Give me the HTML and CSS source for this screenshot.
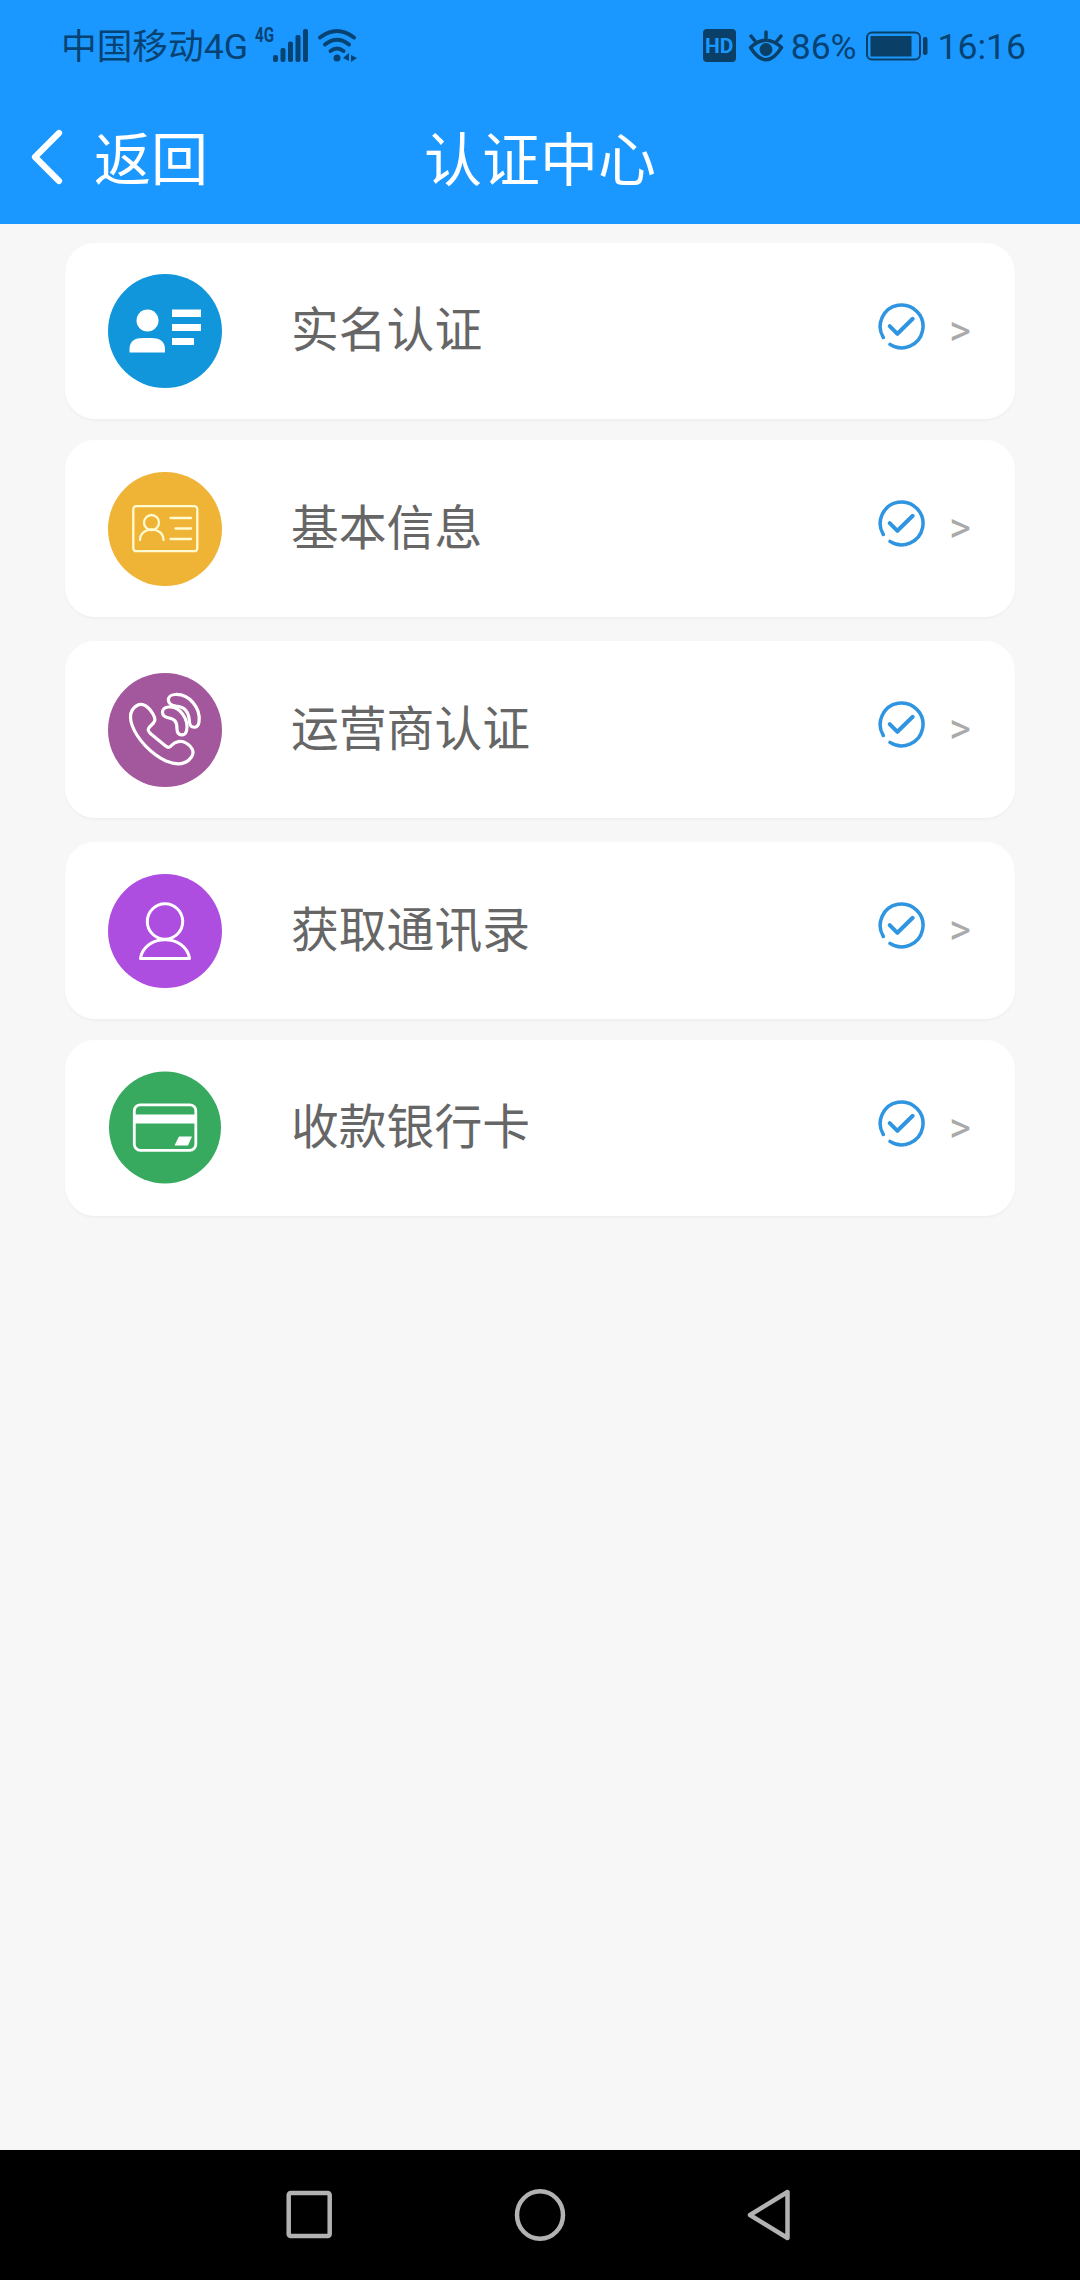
FILE: index.html
```html
<!DOCTYPE html>
<html lang="zh-CN">
<head>
<meta charset="utf-8">
<title>认证中心</title>
<link rel="stylesheet" href="styles.css">
</head>
<body>
<svg width="0" height="0" class="defs">
  <symbol id="check" viewBox="0 0 48 48">
    <g fill="none" stroke="#2f95e0" stroke-linecap="round" stroke-linejoin="round">
      <path stroke-width="3.500" d="M6.300 35.500A21.400 21.400 0 1 1 13 42.400"/>
      <path stroke-width="4" d="M12.700 24.200L20.400 31.800L35.700 16.800"/>
    </g>
  </symbol>
</svg>
<header class="top">
  <div class="status">
    <div class="status-left">
      <span class="carrier">中国移动4G</span>
      <svg class="signal" width="106" height="48" viewBox="0 -6 106 48">
        <text x="2" y="14" class="net" textLength="19" lengthAdjust="spacingAndGlyphs">4G</text>
        <g fill="#064272">
          <rect x="20" y="27" width="5" height="7" rx="2"/><rect x="27.500" y="20" width="5" height="14" rx="2"/><rect x="35" y="13.500" width="5" height="20.500" rx="2"/><rect x="42.500" y="7" width="5" height="27" rx="2"/><rect x="50" y="1" width="5" height="33" rx="2"/>
          <circle cx="84" cy="30" r="3.500"/><path d="M96 25v8l-6-3zM98 27v7l6-4z"/>
        </g>
        <g fill="none" stroke="#064272" stroke-width="4" stroke-linecap="round"><path d="M67 9.500Q84-3.500 101 9.500"/><path d="M72 16.500Q84 7 96 16.500"/><path d="M77.500 23Q84 18 90.500 23"/></g>
      </svg>
    </div>
    <div class="status-right">
      <span class="hd">HD</span>
      <svg width="36" height="34" viewBox="0 0 36 34" fill="none" stroke="#0a4068" stroke-width="3.500" stroke-linecap="round">
        <path d="M2.500 18.500Q18 4 33.500 18.500Q18 43 2.500 18.500Z" stroke-linejoin="round"/><path d="M18 3v6M3 7l4 5M33 7l-4 5"/><circle cx="18" cy="20.500" r="6.500" fill="#0a4068" stroke="none"/>
      </svg>
      <span class="percent">86%</span>
      <svg class="battery" width="62" height="30" viewBox="0 0 62 30">
        <rect x="1" y="1.500" width="53" height="27" rx="5" fill="none" stroke="#0a4068" stroke-width="2"/><rect x="4.500" y="5" width="41" height="20.500" fill="#0a4068"/><rect x="57" y="6" width="4.500" height="18" rx="2" fill="#0a4068"/>
      </svg>
      <span class="clock">16:16</span>
    </div>
  </div>
  <nav class="bar">
    <div class="back">
      <svg width="34" height="56" viewBox="0 0 34 56" fill="none" stroke="#fff" stroke-width="6.200" stroke-linecap="round" stroke-linejoin="round"><path d="M28 4L4 28L28 52"/></svg>
      <span>返回</span>
    </div>
    <h1>认证中心</h1>
  </nav>
</header>
<main class="list">
  <section class="card">
    <svg class="icon" viewBox="0 0 114 114"><circle cx="57" cy="57" r="57" fill="#1296db"/><g fill="#fff"><circle cx="39.500" cy="46.500" r="11"/><path d="M21.500 78.500V75C21.500 67 27 64 35 64H43C51 64 57 67 57 75V78.500Z"/><path d="M64 35.500H93V43H64zM64 50H93V57H64zM64 64H86V71H64z"/></g></svg>
    <span class="label">实名认证</span><svg class="check"><use href="#check"/></svg><span class="arrow">&gt;</span>
  </section>
  <section class="card">
    <svg class="icon" viewBox="0 0 114 114"><circle cx="57" cy="57" r="57" fill="#efb336"/><g fill="none" stroke="#fffbd0" stroke-width="2.300" stroke-linecap="round"><rect x="25.300" y="34.200" width="64" height="45" rx="3"/><circle cx="43.500" cy="50.500" r="7.500"/><path d="M32 68C32 54 55.500 54 55.500 68"/><path d="M62.500 46H83M67.500 56.500H83M62.500 67H83"/></g></svg>
    <span class="label">基本信息</span><svg class="check"><use href="#check"/></svg><span class="arrow">&gt;</span>
  </section>
  <section class="card">
    <svg class="icon" viewBox="0 0 114 114"><circle cx="57" cy="57" r="57" fill="#a3579c"/><g fill="none" stroke="#fff" stroke-width="3.200" stroke-linejoin="round"><path d="M29 32.500C35 29 41 34 45 41C49 48 46 49.500 42 53.500C39 56.500 40 58 43 61L57 72.500C60 75 61.500 75 64 72C67 68.500 73 67 78 70C84 73.500 87 79 83.500 84C78 92 68 92 58 88C43 81 29 66 24 52C21 43 23 36 29 32.500Z"/><path d="M67 21.500C81 20.500 93 35 91 49C90 56 82 56 81.500 49C81 39 76 33.500 68 33C58 32 58 22 67 21.500Z"/><path fill="#a3579c" d="M60 34C72 32 81 47 78.500 58C77 64 69 63 69 56C69 49 67 46 61 45C52 43.500 53 35 60 34Z"/></g></svg>
    <span class="label">运营商认证</span><svg class="check"><use href="#check"/></svg><span class="arrow">&gt;</span>
  </section>
  <section class="card">
    <svg class="icon" viewBox="0 0 114 114"><circle cx="57" cy="57" r="57" fill="#ad4ee0"/><g fill="none" stroke="#fff" stroke-width="3" stroke-linejoin="round"><circle cx="57" cy="47.500" r="17.700"/><path d="M32.500 84.500C36 59.500 78 59.500 81.500 84.500Z"/></g></svg>
    <span class="label">获取通讯录</span><svg class="check"><use href="#check"/></svg><span class="arrow">&gt;</span>
  </section>
  <section class="card">
    <svg class="icon" viewBox="0 0 114 114"><circle cx="57" cy="56.500" r="56" fill="#38aa5f"/><rect x="26.300" y="33.800" width="61.500" height="45.500" rx="6" fill="none" stroke="#fff" stroke-width="2.800"/><path d="M26 43.500H88V52.500H26zM71 65.500H84L80 74.500H66.500z" fill="#fff"/></svg>
    <span class="label">收款银行卡</span><svg class="check"><use href="#check"/></svg><span class="arrow">&gt;</span>
  </section>
</main>
<footer class="keys">
  <svg width="508" height="56" viewBox="0 0 508 56" fill="none" stroke="#b2b2b2" stroke-width="4.500" stroke-linejoin="round"><rect x="4.700" y="6" width="41" height="43" rx="2"/><ellipse cx="256" cy="28" rx="23" ry="23.700"/><path d="M503.500 5V51L466 28Z"/></svg>
</footer>
</body>
</html>
```
FILE: styles.css
```css
* { box-sizing: border-box; }
body {
  margin: 0;
  min-height: 2280px;
  display: flex;
  flex-direction: column;
  background: #f7f7f7;
  font-family: Roboto, "Noto Sans CJK SC", sans-serif;
}
.defs { display: none; }
.top { height: 224px; background: #1a98ff; }
.status {
  height: 91px;
  padding: 0 54px 0 61px;
  display: flex;
  justify-content: space-between;
  color: #064272;
  font-size: 35.500px;
  line-height: 50px;
}
.status-left, .status-right { display: flex; align-items: center; }
.carrier { width: 187px; padding-top: 3px; font-size: 35.700px; white-space: nowrap; }
.signal { margin: 0 0 0 5px; }
.net { font: bold 19.500px Roboto, sans-serif; fill: #064272; }
.hd {
  width: 33px;
  height: 33px;
  margin-right: 12px;
  border-radius: 4px;
  background: #0a4068;
  color: #1a98ff;
  font-size: 21px;
  font-weight: 700;
  line-height: 34px;
  text-align: center;
}
.percent { margin: 0 9px 0 7px; padding-top: 3px; }
.clock { margin-left: 10px; padding-top: 3px; }
.bar {
  height: 133px;
  padding: 0 31px;
  display: grid;
  grid-template-columns: 1fr auto 1fr;
  align-items: center;
  color: #fff;
  font-size: 57px;
}
.back { display: flex; align-items: center; gap: 29px; line-height: 84px; }
.back span { padding-top: 7px; }
.back svg { margin-top: -1px; }
.bar h1 { margin: 0; padding-top: 7px; font-size: 58px; font-weight: 400; line-height: 84px; }
.list { flex: 1; padding: 19px 65px 0; }
.card {
  height: 177px;
  margin-bottom: 24px;
  padding: 0 41px 0 43px;
  display: flex;
  align-items: center;
  border-radius: 30px;
  background: #fff;
  box-shadow: 0 2px 2px #f0f0f0;
}
.card:first-child, .card:last-child { height: 176px; }
.card:first-child, .card:nth-child(4) { margin-bottom: 21px; }
.icon { width: 114px; height: 114px; flex: none; }
.label { flex: 1; margin-left: 69px; color: #666; font-size: 47.800px; line-height: 70px; }
.check { width: 48px; height: 48px; margin: 0 24px 11px 0; }
.arrow { width: 25px; padding-bottom: 1px; color: #aaa; font-size: 42px; line-height: 44px; }
.keys {
  height: 130px;
  padding-left: 284px;
  display: flex;
  align-items: center;
  background: #000;
}
```
